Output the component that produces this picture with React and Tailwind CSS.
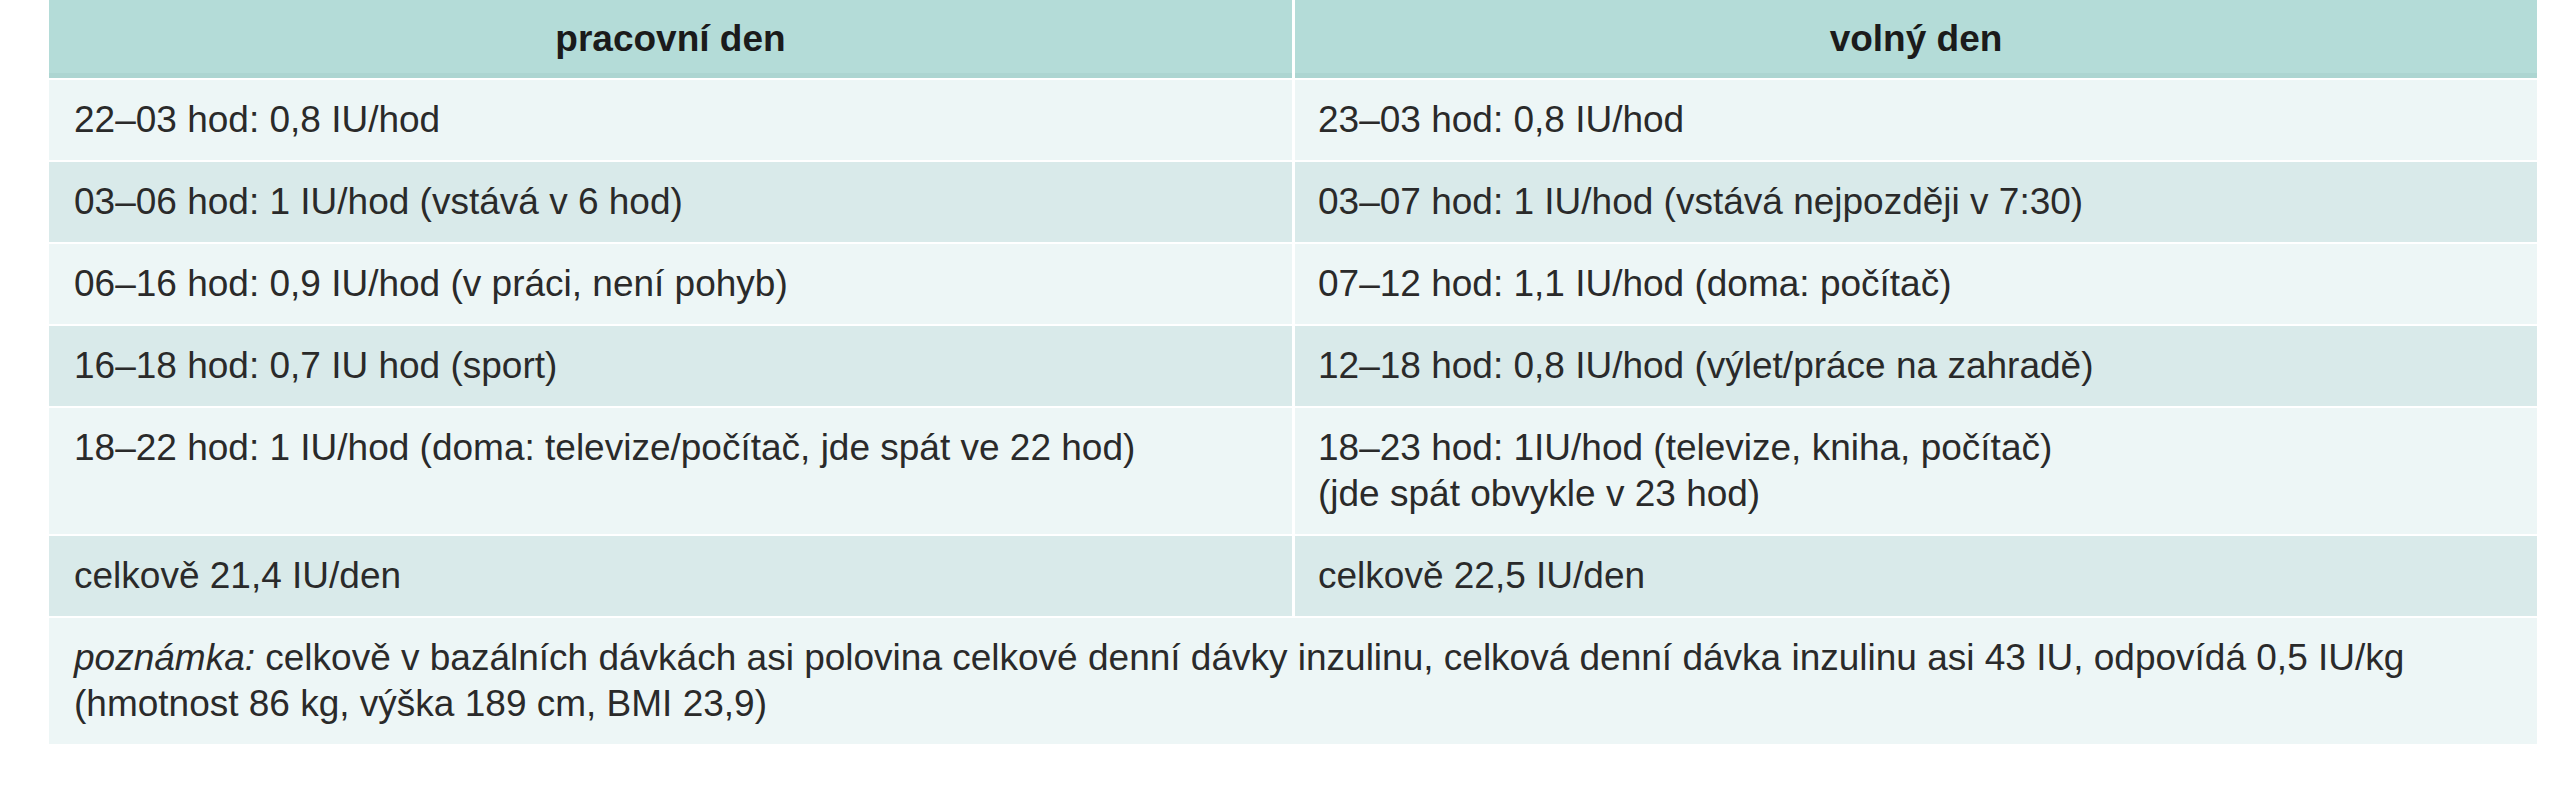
const rows = [
  ['22–03 hod: 0,8 IU/hod', '23–03 hod: 0,8 IU/hod'],
  ['03–06 hod: 1 IU/hod (vstává v 6 hod)', '03–07 hod: 1 IU/hod (vstává nejpozději v 7:30)'],
  ['06–16 hod: 0,9 IU/hod (v práci, není pohyb)', '07–12 hod: 1,1 IU/hod (doma: počítač)'],
  ['16–18 hod: 0,7 IU hod (sport)', '12–18 hod: 0,8 IU/hod (výlet/práce na zahradě)'],
  [
    '18–22 hod: 1 IU/hod (doma: televize/počítač, jde spát ve 22 hod)',
    <>18–23 hod: 1IU/hod (televize, kniha, počítač)<br />(jde spát obvykle v 23 hod)</>,
  ],
  ['celkově 21,4 IU/den', 'celkově 22,5 IU/den'],
]

export default function App() {
  return (
    <div className="min-h-screen bg-white pl-[49px] font-['Liberation_Sans',Arial,sans-serif] text-[37px] leading-[46px] text-[#2a2a2a]">
      <div className="grid w-[2488px] grid-cols-[1243px_1242px] gap-x-[3px] gap-y-[2px] bg-white">
        <div className="flex h-[78px] items-center justify-center border-b-[5px] border-[#acd5d1] bg-[#b4dcd8] pt-[4px] font-bold text-[#1b1b1b]">
          pracovní den
        </div>
        <div className="flex h-[78px] items-center justify-center border-b-[5px] border-[#acd5d1] bg-[#b4dcd8] pt-[4px] font-bold text-[#1b1b1b]">
          volný den
        </div>

        {rows.map((r, i) => {
          const bg = i % 2 === 0 ? 'bg-[#edf6f6]' : 'bg-[#d9eaea]'
          return [
            <div key={`l${i}`} className={`${bg} py-[17px] pl-[25px] pr-4`}>{r[0]}</div>,
            <div key={`r${i}`} className={`${bg} py-[17px] pl-[23px] pr-4`}>{r[1]}</div>,
          ]
        })}

        <div className="col-span-2 bg-[#edf6f6] py-[17px] pl-[25px] pr-6">
          <i>poznámka:</i> celkově v bazálních dávkách asi polovina celkové denní dávky inzulinu, celková denní dávka inzulinu asi 43 IU, odpovídá 0,5 IU/kg
          <br />
          (hmotnost 86 kg, výška 189 cm, BMI 23,9)
        </div>
      </div>
    </div>
  )
}
